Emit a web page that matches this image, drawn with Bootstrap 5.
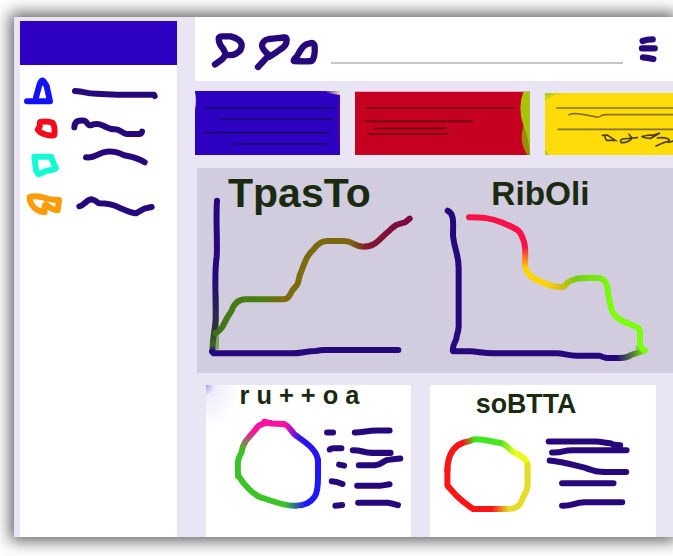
<!DOCTYPE html>
<html lang="en">
<head>
<meta charset="utf-8">
<meta name="viewport" content="width=device-width, initial-scale=1">
<title>Dashboard sketch</title>
<link href="https://cdn.jsdelivr.net/npm/bootstrap@5.3.0/dist/css/bootstrap.min.css" rel="stylesheet">
<style>
  body { background: #fff; font-family: "Liberation Sans", sans-serif; padding: 17px 0 19px 14px; overflow-x: hidden; }
  .shell { background: #e9e5f5; min-height: calc(100vh - 36px); box-shadow: 0 0 15px 4px rgba(0,0,0,.62); }
  .side { width: 157px; margin: 4px 18px 0 6px; background: #fff; }
  .side-head { height: 44px; background: #2d00c2; }
  .side svg { height: 36px; }
  .content { min-width: 0; }
  svg { display: block; overflow: visible; }
  .ink, .ink-group path { fill: none; stroke: #26087c; stroke-width: 18; stroke-linecap: round; stroke-linejoin: round; }
  .side .ink-blue { stroke: #1212f4; }
  .side .ink-red { stroke: #f30b1b; }
  .side .ink-teal { stroke: #13fad5; }
  .side .ink-orange { stroke: #ff9c05; }
  .ink-glow { fill: none; stroke: #81a564; stroke-width: 10; stroke-linecap: round; }
  .ink-axis { stroke: url(#axis); }
  .ink-rise { stroke: url(#rise); }
  .ink-foot { stroke: url(#foot); }
  .ink-fall1 { stroke: url(#fall1); }
  .ink-fall2 { stroke: url(#fall2); }
  .ink-ringA { stroke: url(#ringA); }
  .ink-ringB { stroke: url(#ringB); }
  .ink-ringC { stroke: url(#ringC); }
  .ink-loopA { stroke: url(#loopA); }
  .ink-loopB { stroke: url(#loopB); }
  .topbar { height: 64px; padding: 0 9px 0 15px; }
  .topbar svg { height: 42px; }
  .topbar .ink { stroke-width: 19; }
  .search-line { height: 30px; margin: 0 11px; border: 0; border-bottom: 2px solid #c6c5cd; border-radius: 0; background: transparent; padding: 0; }
  .stats { gap: 15px; margin-top: 10px; }
  .stats svg { height: 64px; width: 100%; overflow: hidden; }
  .stats .short svg { height: 62px; }
  .rule { fill: none; stroke: #000; stroke-opacity: .48; stroke-width: 5; stroke-linecap: round; }
  .scrawl { fill: none; stroke: #000; stroke-opacity: .7; stroke-width: 5; stroke-linecap: round; }
  .g-145 { flex: 145 1 0; min-width: 0; }
  .g-175 { flex: 175 1 0; min-width: 0; }
  .g-128 { flex: 128 1 0; min-width: 0; }
  .charts { background: #d1ccde; margin: 13px 0 0 2px; }
  .bottoms { gap: 19px; margin: 12px 17px 0 11px; }
  .g-205 { flex: 205 1 0; min-width: 0; }
  .g-226 { flex: 226 1 0; min-width: 0; }
  .ttl { font-family: "Liberation Sans", sans-serif; font-weight: 700; fill: #1a2a10; }
</style>
</head>
<body>
<div class="shell d-flex">
  <aside class="side flex-shrink-0">
    <div class="side-head"></div>
    <nav class="nav flex-column pt-2" aria-label="Main">
      <a href="#" aria-label="First section"><svg class="w-100" viewBox="60 219 471 108"><path class="ink ink-blue" d="M81 304H150L140 258L130 243Q125 238 119 252L108 292"/><path class="ink" d="M225 273C260 274 250 281 290 281C320 282 325 284 350 284H462L464 288"/></svg></a>
      <a href="#" aria-label="Second section"><svg class="w-100" viewBox="60 327 471 108"><path class="ink ink-red" d="M120 366Q145 362 158 369Q166 380 163 405Q145 410 121 397L113 389L119 380Z"/><path class="ink" d="M223 382C224 360 239 361 254 362C264 366 260 376 272 376C285 371 295 370 307 376C320 382 329 388 342 388C362 386 364 400 380 402H416Q423 403 426 395"/></svg></a>
      <a href="#" aria-label="Third section"><svg class="w-100" viewBox="60 435 471 108"><path class="ink ink-teal" d="M103 470H153L161 491L168 504Q167 510 140 512L116 523L108 511Z"/><path class="ink" d="M258 472C288 476 294 457 320 455Q349 453 370 465C390 470 408 470 434 487"/></svg></a>
      <a href="#" aria-label="Fourth section"><svg class="w-100" viewBox="60 543 471 108"><path class="ink ink-orange" d="M177 600L173 631Q157 629 149 622L137 613Q132 618 134 636Q112 634 101 621Q88 608 89 591Q100 586 125 591Q145 599 177 600Z"/><path class="ink" d="M238 619C253 616 259 598 276 598Q285 600 296 610C320 610 340 613 358 623C380 632 393 639 408 640Q422 632 433 626L455 621"/></svg></a>
    </nav>
  </aside>

  <main class="content flex-grow-1">
    <header class="topbar bg-white d-flex align-items-center">
      <button class="btn p-0 border-0" aria-label="Search"><svg width="40" viewBox="60 84 120 126"><path class="ink" d="M75 193L96 178L108 164L100 147Q86 132 86 115Q87 109 98 109H122Q152 117 155 134Q156 152 138 161Q128 167 108 165"/></svg></button>
      <button class="btn p-0 border-0" aria-label="Find"><svg width="40" viewBox="180 84 120 126"><path class="ink" d="M204 201L233 170L238 166Q218 151 216 137Q217 121 237 117C261 114 275 114 282 112Q290 111 290 120Q290 138 271 148Q259 158 238 170"/></svg></button>
      <button class="btn p-0 border-0" aria-label="Alerts"><svg width="30" viewBox="300 84 90 126"><path class="ink" d="M311 183Q310 178 321 169C331 151 340 131 360 130Q372 126 374 139C375 156 373 175 365 183Q350 185 311 183Z"/></svg></button>
      <input class="search-line flex-grow-1" type="text" aria-label="Search text">
      <button class="btn p-0 border-0" aria-label="Menu"><svg width="30" viewBox="612 84 90 126"><path class="ink" d="M638 123Q650 118 668 118M636 145H674M639 172Q650 173 670 177"/></svg></button>
    </header>

    <section class="stats d-flex align-items-end">
      <div class="g-145"><svg viewBox="15 273 435 192" preserveAspectRatio="xMinYMin slice">
        <defs><linearGradient id="edge"><stop offset="0" stop-color="#2d00c2"/><stop offset="1" stop-color="#5b009a"/></linearGradient>
        <linearGradient id="tip"><stop offset="0" stop-color="#2d00c2"/><stop offset="1" stop-color="#e4daac"/></linearGradient></defs>
        <path fill="#2d00c2" d="M0 270H2000V470H0Z"/><path fill="url(#edge)" d="M450 280Q430 365 450 455Z"/><path fill="url(#tip)" d="M400 273H450V285Q425 283 400 273Z"/><path fill="#b9aee8" d="M15 275Q22 300 15 330Z"/>
        <path class="rule" d="M45 324H429M86 357H427M43 398H418M121 432H417"/></svg></div>
      <div class="g-175"><svg viewBox="495 273 525 192" preserveAspectRatio="xMinYMin slice">
        <path fill="#c50020" d="M495 275H2000V470H495Z"/><path fill="#9c8a09" d="M1020 340Q974 410 1012 465H1020Z"/><path fill="#a7c408" d="M1000 275H1020V465Q1016 410 1000 375Q982 325 1000 275Z"/>
        <path class="rule" d="M529 324H973M526 364H847M553 385H766M535 402H776"/></svg></div>
      <div class="g-128 short"><svg viewBox="345 279 384 186" preserveAspectRatio="xMinYMin slice">
        <defs><linearGradient id="lime" x2="1" y2="1"><stop offset="0" stop-color="#9cc80c"/><stop offset=".5" stop-color="#ffdc0a"/></linearGradient></defs>
        <path fill="#ffdb0a" d="M345 279H2000V470H345Z"/><path fill="url(#lime)" d="M345 279H405Q360 283 345 310Z"/><path fill="#b5cf0c" d="M345 448Q350 460 360 465H345Z"/>
        <path class="rule" d="M380 324H740M417 344C440 334 469 347 495 350C511 356 510 345 524 344H740M384 388H740"/>
        <path class="scrawl" d="M517 406L532 405Q547 415 556 421L530 421Q524 416 526 408M597 403L606 415Q595 429 574 428Q568 422 577 417L622 413M636 410Q655 404 668 406L690 399L662 415Q643 415 636 410M682 414Q700 411 716 417Q722 424 704 427L678 438M715 427L735 422"/></svg></div>
    </section>

    <section class="charts row g-0">
      <div class="col-6"><svg class="w-100" viewBox="21 24 714 615">
        <defs><linearGradient id="rise" gradientUnits="userSpaceOnUse" x1="70" y1="0" x2="660" y2="0"><stop offset="0" stop-color="#3d6d15"/><stop offset=".08" stop-color="#477b16"/><stop offset=".25" stop-color="#498010"/><stop offset=".35" stop-color="#7c6c0b"/><stop offset=".7" stop-color="#7c6610"/><stop offset=".78" stop-color="#83182e"/><stop offset="1" stop-color="#790743"/></linearGradient>
        <linearGradient id="axis" gradientUnits="userSpaceOnUse" x1="0" y1="120" x2="0" y2="580"><stop offset=".5" stop-color="#26087c"/><stop offset=".85" stop-color="#2c3340"/><stop offset=".94" stop-color="#41681c"/><stop offset="1" stop-color="#26087c"/></linearGradient></defs>
        <text class="ttl" x="114" y="142" font-size="123">TpasTo</text>
        <path class="ink-glow" d="M82 410V565"/>
        <path class="ink ink-axis" d="M81 122C77 180 83 260 80 290C73 340 77 360 77 470C77 510 66 530 68 574"/>
        <path class="ink" d="M66 575L71 580H305C335 580 348 573 378 573Q390 570 405 570H625"/>
        <path class="ink ink-rise" d="M76 520C98 507 98 498 111 474L125 452Q136 419 166 418H278C298 419 298 403 309 389C325 369 322 378 329 347C344 309 350 286 369 270Q388 244 410 243H462C490 243 492 260 520 260C560 260 570 233 596 214C620 191 625 192 645 187L659 176"/>
      </svg></div>
      <div class="col-6"><svg class="w-100" viewBox="15 24 714 615">
        <defs><linearGradient id="fall1" gradientUnits="userSpaceOnUse" x1="0" y1="260" x2="0" y2="325"><stop offset="0" stop-color="#fa1149"/><stop offset="1" stop-color="#ffd500"/></linearGradient>
        <linearGradient id="fall2" gradientUnits="userSpaceOnUse" x1="350" y1="0" x2="550" y2="0"><stop offset="0" stop-color="#ffd310"/><stop offset=".2" stop-color="#d8bd10"/><stop offset=".45" stop-color="#73cf13"/><stop offset="1" stop-color="#7cff0b"/></linearGradient>
        <linearGradient id="foot" gradientUnits="userSpaceOnUse" x1="560" y1="0" x2="640" y2="0"><stop offset="0" stop-color="#26087c"/><stop offset=".7" stop-color="#5b972c"/><stop offset="1" stop-color="#78e40f"/></linearGradient></defs>
        <text class="ttl" x="184" y="136" font-size="100">RibOli</text>
        <path class="ink" d="M53 152C74 162 69 190 69 228C75 277 86 281 86 325V500C84 525 79 523 79 537Q66 563 69 574H120C145 575 160 580 190 580H380C400 580 415 587 440 587H508Q518 592 530 594H570"/>
        <path class="ink ink-foot" d="M570 594Q592 593 603 585L644 571L628 562"/>
        <path class="ink ink-fall1" d="M117 172C160 172 178 173 217 188C263 208 270 210 279 237C290 260 284 284 286 322Q290 342 316 358L355 375"/>
        <path class="ink ink-fall2" d="M350 373Q373 382 395 381C409 381 402 370 424 362Q440 354 463 354H502C530 354 533 378 535 404C544 440 541 456 560 471C585 495 630 494 630 516V560L644 571"/>
      </svg></div>
    </section>

    <section class="bottoms d-flex">
      <article class="bg-white g-205"><svg class="w-100" viewBox="48 45 613 456">
        <defs><linearGradient id="ringA" gradientUnits="userSpaceOnUse" x1="0" y1="185" x2="0" y2="240"><stop offset="0" stop-color="#fa12a2"/><stop offset="1" stop-color="#3dc228"/></linearGradient>
        <linearGradient id="ringB" gradientUnits="userSpaceOnUse" x1="285" y1="0" x2="330" y2="0"><stop offset="0" stop-color="#fa12a2"/><stop offset="1" stop-color="#2914f4"/></linearGradient>
        <linearGradient id="ringC" gradientUnits="userSpaceOnUse" x1="285" y1="0" x2="345" y2="0"><stop offset="0" stop-color="#3dc228"/><stop offset="1" stop-color="#1f16fa"/></linearGradient>
        <radialGradient id="haze" cx="0" cy="0" r="1"><stop offset="0" stop-color="#a99eee"/><stop offset=".25" stop-color="#eeecfb"/><stop offset="1" stop-color="#fff"/></radialGradient></defs>
        <path fill="url(#haze)" d="M48 45H148V175H48Z"/>
        <text class="ttl" x="148" y="101" font-size="76">r u + + o a</text>
        <path class="ink ink-ringC" d="M146 318C162 345 190 372 211 381C238 388 275 406 310 406Q354 408 373 379Q383 363 383 320V270"/>
        <path class="ink ink-ringB" d="M223 155L245 160L283 162C303 172 303 188 318 197C345 216 383 240 383 275"/>
        <path class="ink ink-ringA" d="M240 159Q208 158 197 177L167 212C157 228 156 233 154 247C140 270 143 280 144 318"/>
        <path class="ink" d="M410 187H428M418 238Q419 234 432 234H453M446 283L461 286M424 333Q440 334 456 341M435 406L455 404M493 187C520 187 530 181 560 181H597M487 240C517 240 515 247 545 248H600M505 285H553C579 283 575 268 600 268L629 265M500 346H572L597 342M503 397H592Q605 399 622 404"/>
      </svg></article>
      <article class="bg-white g-226"><svg class="w-100" viewBox="0 45 676 456">
        <defs><linearGradient id="loopA" gradientUnits="userSpaceOnUse" x1="100" y1="0" x2="270" y2="0"><stop offset="0" stop-color="#f81616"/><stop offset=".2" stop-color="#3be821"/><stop offset=".65" stop-color="#48e51b"/><stop offset=".9" stop-color="#eafa1a"/></linearGradient>
        <linearGradient id="loopB" gradientUnits="userSpaceOnUse" x1="185" y1="0" x2="235" y2="0"><stop offset="0" stop-color="#f81616"/><stop offset="1" stop-color="#e4dc28"/></linearGradient></defs>
        <text class="ttl" x="137" y="128" font-size="80">soBTTA</text>
        <path class="ink ink-loopA" d="M52 300C53 240 82 218 117 213Q130 207 135 207C165 206 190 217 216 219C235 227 238 241 256 249C283 262 292 270 292 290"/>
        <path class="ink ink-loopB" d="M52 295V346L80 377Q100 396 129 416H235C277 413 270 391 282 375Q292 357 292 343V285"/>
        <path class="ink" d="M355 214H495C515 214 525 219 540 219Q546 225 569 225M365 247C398 249 396 240 425 240H588M358 271C400 275 430 285 465 293C493 303 498 305 530 305H587M395 339H549M395 406C427 407 432 396 462 396H575"/>
      </svg></article>
    </section>
  </main>
</div>
<script src="https://cdn.jsdelivr.net/npm/bootstrap@5.3.0/dist/js/bootstrap.bundle.min.js"></script>
</body>
</html>
